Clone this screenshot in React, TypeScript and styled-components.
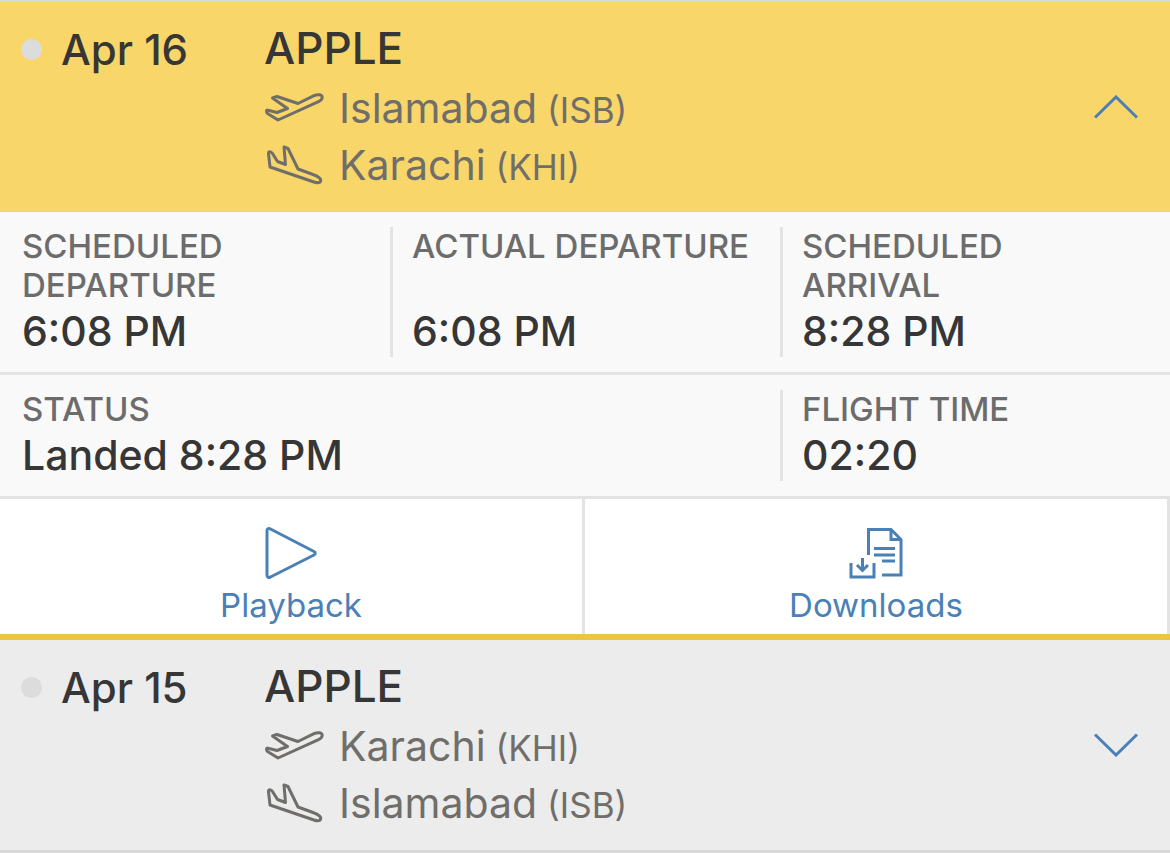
import React from "react";
import styled, { createGlobalStyle } from "styled-components";

const GlobalStyle = createGlobalStyle`
  * { box-sizing: border-box; }
  body {
    margin: 0;
    background: #ececec;
    color: #363636;
    font-family: Inter, "Liberation Sans", sans-serif;
  }
  button { font: inherit; color: inherit; border: 0; cursor: pointer; }
`;

const BLUE = "#4a80b5";
const LINE = "#e3e3e3";

const FlightList = styled.main`
  border-top: 2px solid #d8d9dc;
`;

const Flight = styled.section<{ $open?: boolean }>`
  border-bottom: ${(p) => (p.$open ? "6px solid #ecc347" : "3px solid #d8d8d8")};
`;

const Summary = styled.button<{ $open?: boolean }>`
  display: flex;
  align-items: center;
  width: 100%;
  padding: 17px 32px 18px 21px;
  text-align: left;
  background: ${(p) => (p.$open ? "#f8d669" : "#ececec")};
`;

const SummaryGrid = styled.span`
  flex: 1;
  display: grid;
  grid-template-columns: 243px 1fr;
`;

const FlightDate = styled.span`
  display: flex;
  align-items: center;
  gap: 19px;
  font-size: 42px;
  font-weight: 500;
  line-height: 61px;
`;

const Dot = styled.span`
  width: 21px;
  height: 21px;
  border-radius: 50%;
  background: #dcdcdc;
`;

const Callsign = styled.span`
  font-size: 44px;
  font-weight: 500;
  line-height: 59px;
`;

const Airport = styled.span`
  grid-column: 2;
  display: flex;
  align-items: center;
  gap: 15px;
  color: #706e6a;
  font-size: 41px;
  line-height: 57px;
`;

const Code = styled.span`
  font-size: 35px;
  line-height: 1;
`;

const DetailRow = styled.dl`
  display: grid;
  grid-template-columns: repeat(3, 1fr);
  margin: 0;
  padding: 15px 0;
  background: #f9f9f9;
  border-bottom: 3px solid ${LINE};
`;

const Detail = styled.div<{ $span?: number; $divided?: boolean }>`
  grid-column: span ${(p) => p.$span ?? 1};
  display: flex;
  flex-direction: column;
  justify-content: space-between;
  padding-left: ${(p) => (p.$divided ? 19 : 22)}px;
  padding-right: 28px;
  border-left: ${(p) => (p.$divided ? `3px solid ${LINE}` : "0")};
`;

const Label = styled.dt`
  color: #6c6c6c;
  font-size: 33px;
  font-weight: 500;
  line-height: 39px;
`;

const Value = styled.dd`
  margin: 0;
  font-size: 41px;
  font-weight: 500;
  line-height: 52px;
`;

const Actions = styled.div`
  display: grid;
  grid-template-columns: 1fr 1fr;
`;

const Action = styled.button`
  && {
    display: flex;
    flex-direction: column;
    align-items: center;
    gap: 6px;
    padding: 28px 0 9px;
    background: #fff;
    border-right: 3px solid ${LINE};
    color: ${BLUE};
    font-size: 33px;
    line-height: 40px;
  }
`;

const Drawing = styled.svg`
  flex: none;
  display: block;
  fill: none;
  stroke: currentColor;
  stroke-width: 3;
`;

const Chevron = styled(Drawing)`
  color: ${BLUE};
`;

const TakeoffIcon = () => (
  <Drawing width="60" height="44" viewBox="0 0 60 44" strokeLinejoin="round" aria-hidden="true">
    <path d="M2.500 24Q2.500 22.500 5 23.500L13 25.500L23.500 21.500L8.500 11L13 9.500L34 16.500L50 8.700C54 7 57.500 7.500 58 9.500C58.700 12 57 13.500 54.500 14.700L14 33L3.500 26.500Q2.500 25.500 2.500 24Z" />
  </Drawing>
);

const LandingIcon = () => (
  <Drawing width="60" height="44" viewBox="0 0 60 44" strokeLinejoin="round" aria-hidden="true">
    <path d="M4.500 9.500C4.500 7 7 7 8.500 9.500L13.500 17.500L21.500 20.500L20 3L24 4.500L34 25L49 30.500C55 32.500 57.500 35 56.500 37.500C55.500 39.500 53 39 50 38L6 23Z" />
  </Drawing>
);

type Place = { city: string; code: string };

const AirportLine = ({ place, icon }: { place: Place; icon: React.ReactNode }) => (
  <Airport>
    {icon}
    <span>
      {place.city}
      <Code> ({place.code})</Code>
    </span>
  </Airport>
);

type SummaryProps = { date: string; callsign: string; from: Place; to: Place; open?: boolean };

const FlightSummary = ({ date, callsign, from, to, open = false }: SummaryProps) => (
  <Summary type="button" $open={open} aria-expanded={open}>
    <SummaryGrid>
      <FlightDate>
        <Dot />
        {date}
      </FlightDate>
      <Callsign>{callsign}</Callsign>
      <AirportLine place={from} icon={<TakeoffIcon />} />
      <AirportLine place={to} icon={<LandingIcon />} />
    </SummaryGrid>
    <Chevron width="44" height="24" viewBox="0 0 44 24" aria-hidden="true">
      <path d={open ? "M1 22.500L22 2L43 22.500" : "M1 1.500L22 22L43 1.500"} />
    </Chevron>
  </Summary>
);

const DetailItem = ({ label, value, span, divided }: { label: string; value: string; span?: number; divided?: boolean }) => (
  <Detail $span={span} $divided={divided}>
    <Label>{label}</Label>
    <Value>{value}</Value>
  </Detail>
);

const ISB = { city: "Islamabad", code: "ISB" };
const KHI = { city: "Karachi", code: "KHI" };

export default function App() {
  return (
    <>
      <GlobalStyle />
      <FlightList>
        <Flight $open>
          <FlightSummary date="Apr 16" callsign="APPLE" from={ISB} to={KHI} open />
          <DetailRow>
            <DetailItem label="SCHEDULED DEPARTURE" value="6:08 PM" />
            <DetailItem label="ACTUAL DEPARTURE" value="6:08 PM" divided />
            <DetailItem label="SCHEDULED ARRIVAL" value="8:28 PM" divided />
          </DetailRow>
          <DetailRow>
            <DetailItem label="STATUS" value="Landed 8:28 PM" span={2} />
            <DetailItem label="FLIGHT TIME" value="02:20" divided />
          </DetailRow>
          <Actions>
            <Action type="button">
              <Drawing width="52" height="52" viewBox="0 0 52 52" strokeLinejoin="round" aria-hidden="true">
                <path d="M2 4Q2 0.500 5.500 2L49 24.500Q51.500 26 49 28L5.500 50Q2 51.500 2 48Z" />
              </Drawing>
              Playback
            </Action>
            <Action type="button">
              <Drawing width="54" height="52" viewBox="0 0 54 52" aria-hidden="true">
                <path d="M19.500 28V2.500H42L52 12.500V48H33" />
                <path d="M42 2.500V12.500H52M25 21.500H46M25 28H46M33 34H46" />
                <path d="M2 36V50H25V36M13.500 31V43M8 38L13.500 43.500L19 38" />
              </Drawing>
              Downloads
            </Action>
          </Actions>
        </Flight>
        <Flight>
          <FlightSummary date="Apr 15" callsign="APPLE" from={KHI} to={ISB} />
        </Flight>
      </FlightList>
    </>
  );
}
